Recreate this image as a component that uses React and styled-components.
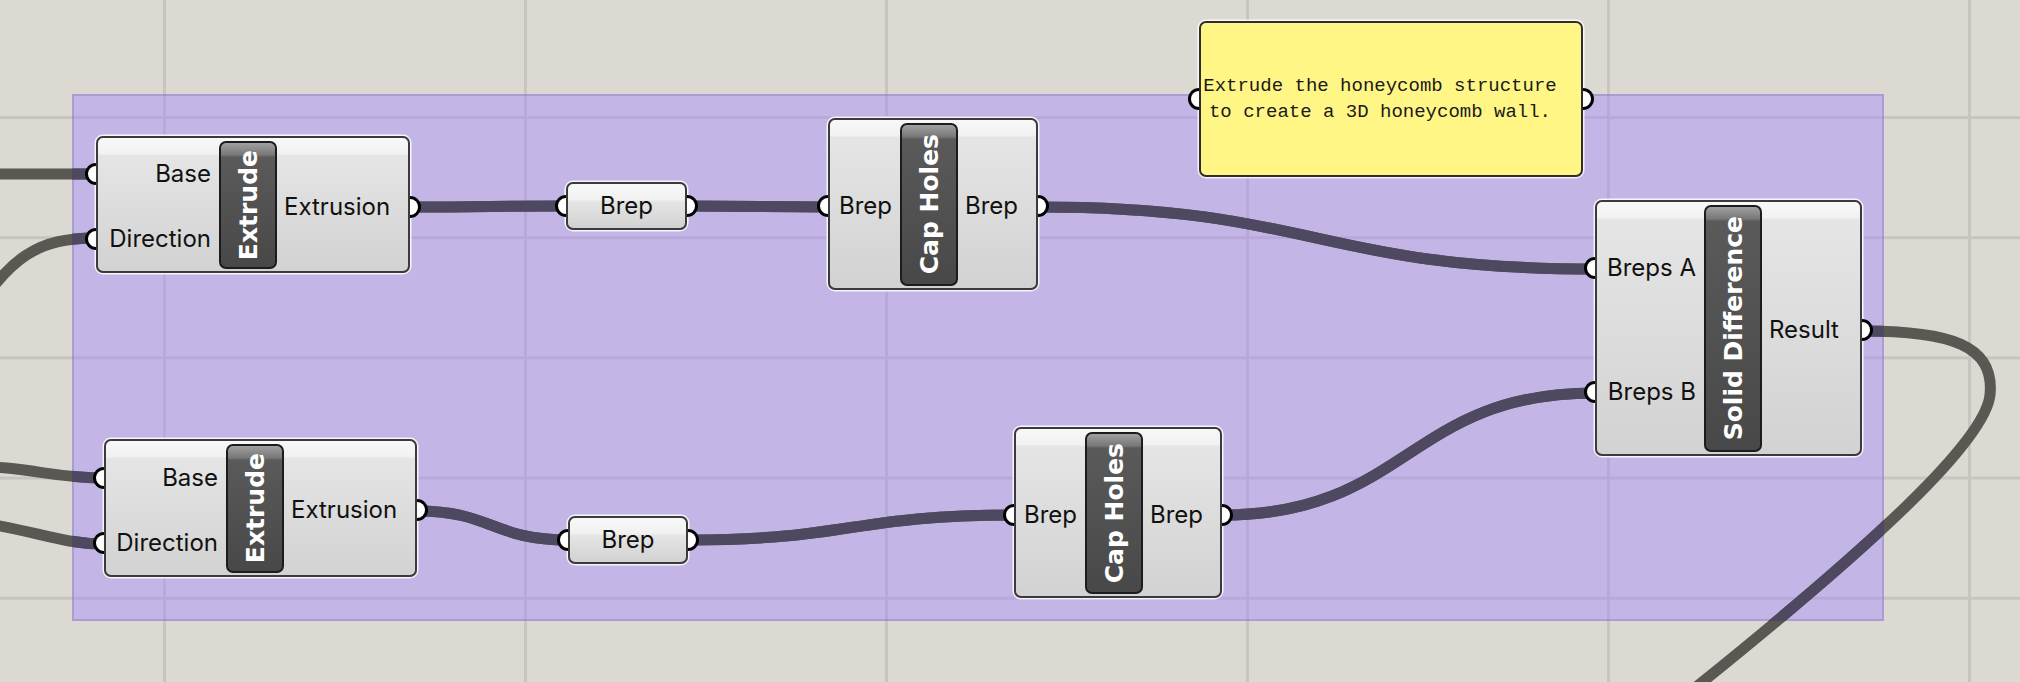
import React from "react";
import styled, { createGlobalStyle } from "styled-components";

const GlobalStyle = createGlobalStyle`
  html, body {
    margin: 0;
    padding: 0;
    background: #dcd9d2;
    overflow: hidden;
  }
  * { box-sizing: border-box; }
`;

const Canvas = styled.div`
  position: relative;
  width: 2020px;
  height: 682px;
  overflow: hidden;
  background-color: #dcd9d2;
  background-image:
    linear-gradient(to right, #c8c5be 0 3px, transparent 3px),
    linear-gradient(to bottom, #c8c5be 0 3px, transparent 3px);
  background-size: 361px 100%, 100% 120.2px;
  background-position: 163px 0, 0 116px;
  font-family: Inter, "Liberation Sans", sans-serif;
`;

const Group = styled.div`
  position: absolute;
  left: 72px;
  top: 94px;
  width: 1812px;
  height: 527px;
  background: rgba(163, 135, 255, 0.44);
  border: 2px solid rgba(120, 100, 170, 0.3);
`;

const Wires = styled.svg`
  position: absolute;
  left: 0;
  top: 0;
`;

const Node = styled.div`
  position: absolute;
  left: ${(p) => p.$x}px;
  top: ${(p) => p.$y}px;
  width: ${(p) => p.$w}px;
  height: ${(p) => p.$h}px;
  display: flex;
  border: 2px solid #3b3b3b;
  border-radius: 7px;
  background: linear-gradient(to bottom, #f8f8f8 0, #f1f1f1 16px, #e5e5e5 17px, #d2d2d2 100%);
  box-shadow: 0 0 0 1.5px rgba(255, 255, 255, 0.85);
`;

const Side = styled.div`
  flex: ${(p) => (p.$w ? "none" : "1")};
  width: ${(p) => (p.$w ? `${p.$w}px` : "auto")};
  display: flex;
  flex-direction: column;
  padding-top: ${(p) => (p.$flat ? 0 : 4)}px;
`;

const Row = styled.div`
  position: relative;
  flex: 1;
  display: flex;
  align-items: center;
  justify-content: ${(p) =>
    p.$side === "in" ? "flex-end" : p.$side === "out" ? "flex-start" : "center"};
  padding: ${(p) => (p.$side === "in" ? "0 8px 0 0" : p.$side === "out" ? "0 0 0 7px" : "0")};
  font-size: 24px;
  line-height: 1;
  color: #111;
  white-space: nowrap;
`;

const Port = styled.span`
  position: absolute;
  top: 50%;
  margin-top: -11px;
  width: 11px;
  height: 22px;
  background: #fff;
  border: 3.5px solid #000;
  ${(p) =>
    p.$side === "in"
      ? "left: -13px; border-right: 0; border-radius: 11px 0 0 11px;"
      : "right: -13px; border-left: 0; border-radius: 0 11px 11px 0;"}
`;

const Pill = styled.div`
  width: 58px;
  flex: none;
  margin: 3px 0 2px;
  border: 2px solid #1c1c1c;
  border-radius: 7px;
  background: linear-gradient(to bottom, #a0a0a0 0, #777 12px, #5a5a5a 14px, #484848 100%);
  display: flex;
  align-items: center;
  justify-content: center;
`;

const PillText = styled.span`
  writing-mode: vertical-rl;
  transform: rotate(180deg);
  font-family: "DejaVu Sans", sans-serif;
  font-weight: bold;
  font-size: 25px;
  line-height: 1;
  color: #fff;
  white-space: nowrap;
`;

const Panel = styled.div`
  position: absolute;
  left: 1199px;
  top: 21px;
  width: 384px;
  height: 156px;
  display: flex;
  align-items: center;
  justify-content: center;
  padding-right: 22px;
  background: #fff685;
  border: 2px solid #2e2e2e;
  border-radius: 7px;
  box-shadow: 0 0 0 1.5px rgba(255, 255, 255, 0.8);
  font-family: "Liberation Mono", "DejaVu Sans Mono", monospace;
  font-size: 19px;
  line-height: 26px;
  color: #1a1a1a;
  text-align: center;
  white-space: pre;
`;

const components = [
  { name: "Extrude", x: 96, y: 136, w: 314, h: 137, inW: 121, inputs: ["Base", "Direction"], outputs: ["Extrusion"] },
  { name: "Cap Holes", x: 828, y: 118, w: 210, h: 172, inW: 70, inputs: ["Brep"], outputs: ["Brep"] },
  { name: "Solid Difference", x: 1595, y: 200, w: 267, h: 256, inW: 107, inputs: ["Breps A", "Breps B"], outputs: ["Result"] },
  { name: "Extrude", x: 104, y: 439, w: 313, h: 138, inW: 120, inputs: ["Base", "Direction"], outputs: ["Extrusion"] },
  { name: "Cap Holes", x: 1014, y: 427, w: 208, h: 171, inW: 69, inputs: ["Brep"], outputs: ["Brep"] },
];

const params = [
  { x: 566, y: 182, w: 121, h: 48 },
  { x: 568, y: 516, w: 120, h: 48 },
];

const wires = [
  "M -10 174 C 40 174, 50 174, 96 174",
  "M -30 320 C 10 255, 40 238, 96 238",
  "M -40 466 C 30 466, 50 478, 104 478",
  "M -60 520 C 20 522, 50 544, 104 544",
  "M 410 207 C 490 207, 490 206, 566 206",
  "M 687 206 C 760 206, 760 207, 828 207",
  "M 1038 207 C 1316 207, 1316 269, 1595 269",
  "M 417 511 C 492 511, 492 540, 568 540",
  "M 688 540 C 851 540, 851 515, 1014 515",
  "M 1222 515 C 1408 515, 1408 393, 1595 393",
  "M 1862 331 C 1950 331, 1995 345, 1990 395 C 1985 440, 1880 540, 1680 700",
];

const Component = ({ c }) => (
  <Node $x={c.x} $y={c.y} $w={c.w} $h={c.h}>
    <Side $w={c.inW}>
      {c.inputs.map((label) => (
        <Row key={label} $side="in">
          <Port $side="in" />
          {label}
        </Row>
      ))}
    </Side>
    <Pill>
      <PillText>{c.name}</PillText>
    </Pill>
    <Side>
      {c.outputs.map((label) => (
        <Row key={label} $side="out">
          {label}
          <Port $side="out" />
        </Row>
      ))}
    </Side>
  </Node>
);

const Param = ({ p }) => (
  <Node $x={p.x} $y={p.y} $w={p.w} $h={p.h}>
    <Side $flat>
      <Row>
        <Port $side="in" />
        Brep
        <Port $side="out" />
      </Row>
    </Side>
  </Node>
);

const App = () => {
  return (
    <>
      <GlobalStyle />
      <Canvas>
        <Group />
        <Wires width="2020" height="682" viewBox="0 0 2020 682">
          <defs>
            <clipPath id="groupClip">
              <rect x="72" y="94" width="1812" height="527" />
            </clipPath>
          </defs>
          <g fill="none" strokeWidth="11" strokeLinecap="round">
            {wires.map((d, i) => (
              <path key={i} d={d} stroke="#5a5853" />
            ))}
            <g clipPath="url(#groupClip)">
              {wires.map((d, i) => (
                <path key={i} d={d} stroke="#4e4961" />
              ))}
            </g>
          </g>
        </Wires>
        {components.map((c, i) => (
          <Component key={i} c={c} />
        ))}
        {params.map((p, i) => (
          <Param key={i} p={p} />
        ))}
        <Panel>
          <Port $side="in" />
          {"Extrude the honeycomb structure\nto create a 3D honeycomb wall."}
          <Port $side="out" />
        </Panel>
      </Canvas>
    </>
  );
};

export default App;
